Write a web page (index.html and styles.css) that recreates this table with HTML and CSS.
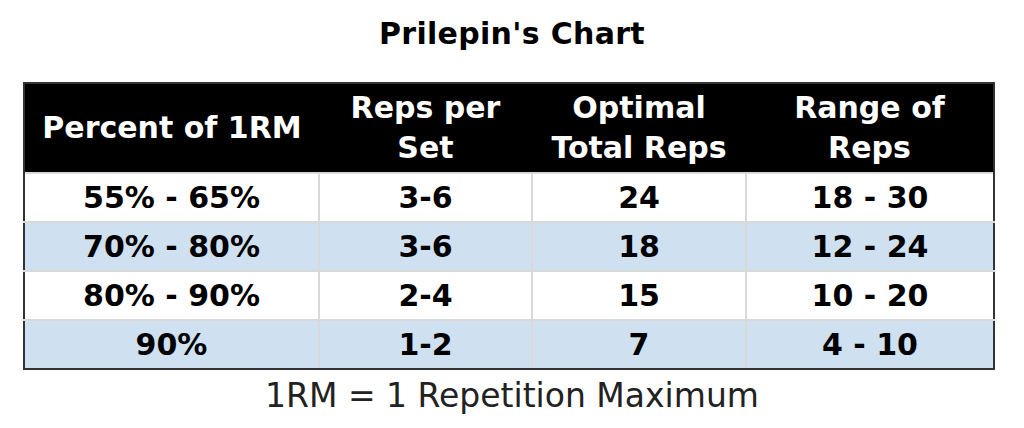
FILE: index.html
```html
<!DOCTYPE html>
<html>
<head>
<meta charset="utf-8">
<link rel="stylesheet" href="styles.css">
</head>
<body>
<div class="page">
  <h1 class="title">Prilepin's Chart</h1>
  <table class="chart">
    <colgroup>
      <col class="c1"><col class="c2"><col class="c3"><col class="c4">
    </colgroup>
    <thead>
      <tr>
        <th>Percent of 1RM</th>
        <th>Reps per<br>Set</th>
        <th>Optimal<br>Total Reps</th>
        <th>Range of<br>Reps</th>
      </tr>
    </thead>
    <tbody>
      <tr><td>55% - 65%</td><td>3-6</td><td>24</td><td>18 - 30</td></tr>
      <tr class="alt"><td>70% - 80%</td><td>3-6</td><td>18</td><td>12 - 24</td></tr>
      <tr><td>80% - 90%</td><td>2-4</td><td>15</td><td>10 - 20</td></tr>
      <tr class="alt"><td>90%</td><td>1-2</td><td>7</td><td>4 - 10</td></tr>
    </tbody>
  </table>
  <p class="note">1RM = 1 Repetition Maximum</p>
</div>
</body>
</html>
```
FILE: styles.css
```css
html, body {
  margin: 0;
  padding: 0;
  background: #fff;
}
.page {
  width: 1024px;
  height: 428px;
  display: flex;
  flex-direction: column;
  align-items: center;
  font-family: "DejaVu Sans", sans-serif;
  color: #000;
}
.title {
  margin: 14px 0 0;
  height: 68px;
  line-height: 40px;
  font-size: 30px;
  font-weight: bold;
  letter-spacing: 0.3px;
}
.chart {
  width: 970px;
  margin-left: -6px;
  border-collapse: collapse;
  border: 2px solid #333;
  table-layout: fixed;
}
.c1 { width: 295px; }
.c2 { width: 213px; }
.c3 { width: 214px; }
.c4 { width: 248px; }
.chart th {
  background: #000;
  color: #fff;
  font-size: 30px;
  font-weight: bold;
  line-height: 40px;
  height: 88px;
  padding: 0;
  text-align: center;
}
.chart td {
  height: 47px;
  padding: 0;
  text-align: center;
  font-size: 30px;
  font-weight: bold;
  border: 2px solid #d9d9d9;
}
.chart tbody tr:last-child td { border-bottom: 2px solid #333; }
.chart tbody tr td:first-child { border-left: 2px solid #333; }
.chart tbody tr td:last-child { border-right: 2px solid #333; }
.chart tr.alt td { background: #cfe0f1; }
.note {
  margin: 7px 0 0;
  font-size: 33px;
  line-height: 38px;
  color: #222;
}
```
